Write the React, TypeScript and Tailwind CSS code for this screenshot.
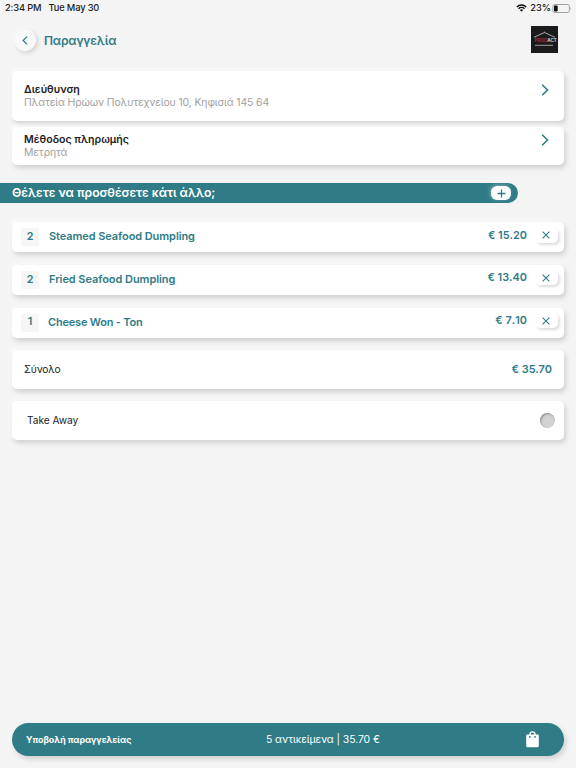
import type { ReactNode } from "react";

const items = [
  { qty: 2, name: "Steamed Seafood Dumpling", price: "€ 15.20", nameClass: "ml-[10px] tracking-[-0.08px]" },
  { qty: 2, name: "Fried Seafood Dumpling", price: "€ 13.40", nameClass: "ml-[10px] tracking-[-0.06px]" },
  { qty: 1, name: "Cheese Won - Ton", price: "€ 7.10", nameClass: "ml-[9px] tracking-[-0.2px]" },
];

export default function App() {
  return (
    <div className="flex h-[768px] w-[576px] flex-col overflow-hidden bg-[#f4f4f4] font-['Inter','Noto_Sans',sans-serif] text-[#222]">
      <StatusBar />

      <header className="mt-[10px] flex h-7 items-center pr-[18px] pl-[14px]">
        <button
          aria-label="Πίσω"
          className="flex size-[22px] items-center justify-center rounded-full bg-[#f8f8f8] shadow-[2px_2px_4px_#d2d2d2,-2px_-2px_4px_#f8f8f8]"
        >
          <Chevron className="h-[9px] w-[6px] rotate-180" />
        </button>
        <h1 className="mt-[2px] ml-2 text-[12.1px] leading-none font-semibold tracking-[-0.17px] text-[#2f7c86]">
          Παραγγελία
        </h1>
        <Logo />
      </header>

      <main className="mt-[17px] flex flex-col">
        <Card className="h-[50px] items-start pt-[12px]">
          <Detail label="Διεύθυνση" value="Πλατεία Ηρώων Πολυτεχνείου 10, Κηφισιά 145 64" />
        </Card>
        <Card className="mt-[6px] h-[38px] items-start pt-[6px]">
          <Detail label="Μέθοδος πληρωμής" value="Μετρητά" />
        </Card>

        <div className="mt-[18px] flex h-5 w-[518px] items-center justify-between rounded-r-full bg-[#2f7c86] pr-[7px] pl-[12px] text-white">
          <span className="mt-px text-[12.2px] leading-none font-semibold tracking-[-0.03px]">
            Θέλετε να προσθέσετε κάτι άλλο;
          </span>
          <button
            aria-label="Προσθήκη"
            className="flex h-[14px] w-5 items-center justify-center rounded-[6px] bg-white shadow-[-1px_-1px_4px_rgba(255,255,255,0.35)]"
          >
            <svg width="9" height="9" viewBox="0 0 9 9" fill="none">
              <path d="M4.5.5v8M.5 4.5h8" stroke="#2f7c86" strokeWidth="1.3" />
            </svg>
          </button>
        </div>

        <ul className="mt-[19px] flex flex-col gap-[12.75px]">
          {items.map((item) => (
            <li key={item.name}>
              <Card className="h-[30px] items-center text-[#2f7c86]">
                <span className="-ml-[3px] flex h-[18px] w-[18px] items-center justify-center rounded-[2px] bg-[#f6f6f6] text-[10.8px] font-semibold">
                  {item.qty}
                </span>
                <span className={`mb-px text-[11px] leading-none font-semibold ${item.nameClass}`}>
                  {item.name}
                </span>
                <span className="mb-[4px] ml-auto text-[10.9px] leading-none font-semibold [font-kerning:none]">
                  {item.price}
                </span>
                <button
                  aria-label="Αφαίρεση"
                  className="-mr-[6px] mb-[4px] ml-[8px] flex h-[15px] w-[23px] items-center justify-center rounded-[5px] bg-white pr-[2px] shadow-[2px_2px_3px_#dedede]"
                >
                  <svg width="8" height="8" viewBox="0 0 8 8" fill="none">
                    <path d="M.6.6l6.8 6.8M7.4.6L.6 7.4" stroke="#2f7c86" strokeWidth="1.1" />
                  </svg>
                </button>
              </Card>
            </li>
          ))}
        </ul>

        <Card className="mt-[12.5px] h-[39px] items-center justify-between">
          <span className="mt-px text-[10.2px] tracking-[-0.2px]">Σύνολο</span>
          <span className="text-[11px] font-semibold text-[#2f7c86]">€ 35.70</span>
        </Card>
        <Card className="mt-3 h-[39px] items-center justify-between">
          <span className="mt-px ml-[3px] text-[10.2px] tracking-[-0.05px]">Take Away</span>
          <span className="-mr-[3px] size-[15px] rounded-full bg-[#d2d2d2] shadow-[inset_1px_1px_2px_#8e8e8e]" />
        </Card>
      </main>

      <footer className="mx-3 mt-auto mb-3 grid h-[33px] grid-cols-[240px_1fr_auto] items-center rounded-full bg-[#2f7c86] pr-[24px] pl-[14px] text-white shadow-[2px_3px_5px_#d0d0d0]">
        <span className="text-[8.9px] font-bold tracking-[-0.04px]">Υποβολή παραγγελείας</span>
        <span className="text-[10.4px] tracking-[-0.06px]">5 αντικείμενα | 35.70 €</span>
        <svg width="15" height="17" viewBox="0 0 15 17" fill="none">
          <path d="M4.9 5V3.4a2.6 2.6 0 015.2 0V5" stroke="#fff" strokeWidth="1.2" />
          <path
            d="M2.4 3.6h10.2c.7 0 1.2.5 1.2 1.2V15c0 .7-.5 1.2-1.2 1.2H2.4c-.7 0-1.2-.5-1.2-1.2V4.8c0-.7.5-1.2 1.2-1.2z"
            fill="#fff"
          />
          <circle cx="4.9" cy="5.9" r=".9" fill="#2f7c86" />
          <circle cx="10.1" cy="5.9" r=".9" fill="#2f7c86" />
        </svg>
      </footer>
    </div>
  );
}

function Card({ className, children }: { className: string; children: ReactNode }) {
  return (
    <div
      className={`mx-3 flex rounded-[5px] bg-white px-[12px] shadow-[2px_3px_5px_#d0d0d0,-2px_-2px_4px_#fafafa] ${className}`}
    >
      {children}
    </div>
  );
}

function Detail({ label, value }: { label: string; value: string }) {
  return (
    <>
      <div className="flex flex-1 flex-col leading-[13px]">
        <span className="text-[10.6px] font-semibold">{label}</span>
        <span className="text-[10.4px] tracking-[-0.1px] text-[#a0a0a0]">{value}</span>
      </div>
      <Chevron className="mt-[0.5px] mr-[3px] h-[12px] w-[8px]" />
    </>
  );
}

function Chevron({ className }: { className: string }) {
  return (
    <svg viewBox="0 0 8 12" fill="none" className={className}>
      <path d="M1.2.8L6.5 6l-5.3 5.2" stroke="#2f7c86" strokeWidth="1.6" />
    </svg>
  );
}

function StatusBar() {
  return (
    <div className="flex h-4 items-center pr-[4px] pl-[5px] text-[9.3px] font-medium tracking-[-0.14px] text-[#222]">
      <span>2:34 PM</span>
      <span className="ml-[7px]">Tue May 30</span>
      <svg width="11" height="8" viewBox="0 0 11 8" fill="none" className="ml-auto">
        <path
          d="M.8 2.9a6.8 6.8 0 019.4 0M2.5 4.7a4.3 4.3 0 016 0"
          stroke="#111"
          strokeWidth="1.4"
        />
        <path d="M5.5 7.7L3.9 6.1a2.3 2.3 0 013.2 0L5.5 7.7z" fill="#111" />
      </svg>
      <span className="ml-[3px] tracking-[-0.05px]">23%</span>
      <svg width="20" height="9" viewBox="0 0 20 9" fill="none" className="ml-[1px]">
        <rect x=".9" y=".5" width="16.5" height="8" rx="2" stroke="#999" strokeWidth=".9" />
        <rect x="2" y="1.6" width="3.7" height="5.8" rx=".8" fill="#111" />
        <path d="M18.5 3.2c.8.3.8 2.3 0 2.6V3.2z" fill="#999" />
      </svg>
    </div>
  );
}

function Logo() {
  return (
    <svg width="27" height="27" viewBox="0 0 27 27" className="-mt-px ml-auto" fill="none">
      <rect width="27" height="27" fill="#1b1b1d" />
      <path d="M3 11.3L13.4 6.5 24 11.3M13.4 6.5V5.6" stroke="#ccc" strokeWidth=".8" />
      <text x="3.5" y="16" fontSize="4.6" fontWeight="700">
        <tspan fill="#a52a32">PROD</tspan>
        <tspan fill="#c4d0c8">ACT</tspan>
      </text>
      <path d="M4 19.3h18" stroke="#aaa" strokeWidth=".9" />
    </svg>
  );
}
